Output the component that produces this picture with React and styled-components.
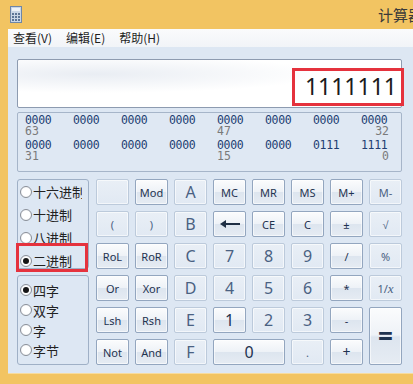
import styled, { createGlobalStyle } from "styled-components";

const Global = createGlobalStyle`
  html, body { margin: 0; padding: 0; background: #f2c462; }
  body { width: 413px; height: 384px; overflow: hidden; }
  * { box-sizing: border-box; }
`;

const Win = styled.div`
  width: 413px;
  height: 384px;
  background: #f2c462;
  display: flex;
  flex-direction: column;
  font-family: "Noto Sans", "Noto Sans CJK SC", sans-serif;
  overflow: hidden;
`;

const TitleBar = styled.div`
  height: 29px;
  flex: none;
  display: flex;
  align-items: center;
  justify-content: space-between;
  padding-left: 10px;
  white-space: nowrap;
`;

const Title = styled.div`
  font-family: "Noto Sans CJK SC", sans-serif;
  font-size: 15px;
  color: #3a3a3a;
  margin-right: -10px;
`;

const Client = styled.div`
  flex: 1;
  margin: 0 0 10px 8px;
  background: #dde7f3;
  display: flex;
  flex-direction: column;
  border-bottom: 1px solid #f7dc9f;
`;

const MenuBar = styled.div`
  height: 18px;
  flex: none;
  background: linear-gradient(#fafbfc, #f1f4f8);
  display: flex;
  gap: 14px;
  padding-left: 5px;
  align-items: center;
  font-family: "Noto Sans CJK SC", sans-serif;
  font-size: 12px;
  color: #1e1e1e;
  line-height: 18px;
`;

const Body = styled.div`
  padding: 12px 0 0 9px;
  display: flex;
  flex-direction: column;
`;

const Display = styled.div`
  position: relative;
  width: 385px;
  height: 49px;
  border: 1px solid #8d9bb0;
  border-radius: 2px;
  background: radial-gradient(ellipse 60% 40% at 20% 30%, #e9edf3, #ffffff);
  display: flex;
  align-items: flex-end;
  justify-content: flex-end;
  padding: 0 4px 7px 0;
  font-size: 23px;
  line-height: 28px;
  color: #1b1b1b;
`;

const Mark = styled.div`
  position: absolute;
  left: ${(p) => p.$l}px;
  top: ${(p) => p.$t}px;
  width: ${(p) => p.$w}px;
  height: ${(p) => p.$h}px;
  border: 3px solid #e5323d;
  pointer-events: none;
`;

const Bits = styled.div`
  margin-top: 4px;
  width: 385px;
  height: 60px;
  border: 1px solid #a6b5c9;
  border-radius: 2px;
  background: #dfe8f3;
  padding: 1px 0 0 7px;
  display: grid;
  grid-template-columns: repeat(7, 48px) 28px;
  grid-template-rows: 25px 25px;
  font-family: "DejaVu Sans Mono", monospace;
  font-size: 11.5px;
  line-height: 12px;
`;

const Cell = styled.div`
  display: flex;
  flex-direction: column;
`;

const Nib = styled.div`
  color: #223e72;
  letter-spacing: -0.3px;
  height: 11px;
`;

const Lbl = styled.div`
  color: #7a7a7a;
  height: 12px;
  text-align: ${(p) => (p.$right ? "right" : "left")};
`;

const Pad = styled.div`
  margin-top: 7px;
  display: grid;
  grid-template-columns: 73px repeat(8, 33px);
  grid-auto-rows: 26px;
  gap: 6px;
`;

const Group = styled.div`
  position: relative;
  grid-column: 1;
  grid-row: ${(p) => p.$row} / span 3;
  width: 72px;
  border: 1px solid #9fb0c6;
  border-radius: 3px;
  padding: ${(p) => p.$pad}px 0 0 2px;
`;

const Clip = styled.div`
  width: 62px;
  overflow: hidden;
  display: flex;
  flex-direction: column;
`;

const Opt = styled.div`
  height: ${(p) => p.$h}px;
  display: flex;
  align-items: center;
  gap: 1px;
  white-space: nowrap;
  font-family: "Noto Sans CJK SC", sans-serif;
  font-size: 13px;
  color: #222;
`;

const Dot = styled.span`
  flex: none;
  width: 12px;
  height: 12px;
  border-radius: 50%;
  border: 1px solid #8a8f98;
  background: radial-gradient(circle, #ffffff 50%, #e4e6ea);
  display: flex;
  align-items: center;
  justify-content: center;
  &::after {
    content: "";
    width: 6px;
    height: 6px;
    border-radius: 50%;
    background: ${(p) => (p.$on ? "#151515" : "transparent")};
  }
`;

const Key = styled.button`
  grid-column: span ${(p) => p.$cols || 1};
  grid-row: span ${(p) => p.$rows || 1};
  margin: 0;
  padding: 0;
  border-radius: 2px;
  border: 1px solid ${(p) => (p.$off ? "#bccadb" : "#93a6bf")};
  background: ${(p) =>
    p.$off
      ? "linear-gradient(#e9eff6, #e1e9f3)"
      : "linear-gradient(#fbfcfd 0%, #eef2f7 48%, #dde5ef 52%, #e6ecf3 100%)"};
  color: ${(p) => (p.$off ? "#4a6182" : "#1f3350")};
  font-family: "Noto Sans", sans-serif;
  font-size: ${(p) => p.$fs || 11}px;
  font-weight: ${(p) => (p.$bold ? 700 : 400)};
  display: flex;
  align-items: center;
  justify-content: center;
  line-height: 1;
  box-shadow: inset 0 0 0 1px rgba(255, 255, 255, 0.6);
`;

const Ital = styled.i`
  font-family: "Liberation Serif", serif;
  font-size: 13px;
`;

const CalcIcon = () => (
  <svg width="12" height="17" viewBox="0 0 12 17">
    <rect x="0.5" y="0.5" width="11" height="16" fill="#c9d6e6" stroke="#6f86a6" />
    <rect x="2" y="2" width="8" height="3" fill="#eef3f8" />
    {[0, 1, 2].map((r) =>
      [0, 1, 2].map((c) => (
        <rect key={`${r}${c}`} x={2 + c * 3} y={7 + r * 3} width="2" height="2" fill="#5c7596" />
      ))
    )}
  </svg>
);

const BackArrow = () => (
  <svg width="20" height="8" viewBox="0 0 20 8">
    <path d="M0 4 L6 0 L6 3 L20 3 L20 5 L6 5 L6 8 Z" fill="#1f2f44" />
  </svg>
);

const nibbles = [
  ["0000", "0000", "0000", "0000", "0000", "0000", "0000", "0000"],
  ["0000", "0000", "0000", "0000", "0000", "0000", "0111", "1111"],
];
const labels = [
  { 0: "63", 4: "47", 7: "32" },
  { 0: "31", 4: "15", 7: "0" },
];

const keys = [
  { t: "", off: true }, { t: "Mod" }, { t: "A", fs: 16, off: true },
  { t: "MC" }, { t: "MR" }, { t: "MS" }, { t: "M+" }, { t: "M-", off: true },
  { t: "(", off: true }, { t: ")", off: true }, { t: "B", fs: 16, off: true },
  { t: "back" }, { t: "CE" }, { t: "C" }, { t: "±" }, { t: "√", off: true },
  { t: "RoL" }, { t: "RoR" }, { t: "C", fs: 16, off: true },
  { t: "7", fs: 16, off: true }, { t: "8", fs: 16, off: true }, { t: "9", fs: 16, off: true },
  { t: "/" }, { t: "%", off: true },
  { t: "Or" }, { t: "Xor" }, { t: "D", fs: 16, off: true },
  { t: "4", fs: 16, off: true }, { t: "5", fs: 16, off: true }, { t: "6", fs: 16, off: true },
  { t: "*" }, { t: "inv", off: true },
  { t: "Lsh" }, { t: "Rsh" }, { t: "E", fs: 16, off: true },
  { t: "1", fs: 16 }, { t: "2", fs: 16, off: true }, { t: "3", fs: 16, off: true },
  { t: "-" }, { t: "=", fs: 26, bold: true, rows: 2 },
  { t: "Not" }, { t: "And" }, { t: "F", fs: 16, off: true },
  { t: "0", fs: 16, cols: 2 }, { t: ".", off: true }, { t: "+", fs: 14 },
];

const keyLabel = (t) => {
  if (t === "back") return <BackArrow />;
  if (t === "inv") return <>1/<Ital>x</Ital></>;
  return t;
};

export default function App() {
  return (
    <>
      <Global />
      <Win>
        <TitleBar>
          <CalcIcon />
          <Title>计算器</Title>
        </TitleBar>
        <Client>
          <MenuBar>
            <span>查看(V)</span>
            <span>编辑(E)</span>
            <span>帮助(H)</span>
          </MenuBar>
          <Body>
            <Display>
              1111111
              <Mark $l={274} $t={8} $w={112} $h={38} />
            </Display>
            <Bits>
              {nibbles.map((row, r) =>
                row.map((n, c) => (
                  <Cell key={`${r}-${c}`}>
                    <Nib>{n}</Nib>
                    <Lbl $right={c === 7}>{labels[r][c] || ""}</Lbl>
                  </Cell>
                ))
              )}
            </Bits>
            <Pad>
              <Group $pad={0} $row={1}>
                <Clip>
                  <Opt $h={23}><Dot />十六进制</Opt>
                  <Opt $h={23}><Dot />十进制</Opt>
                  <Opt $h={23}><Dot />八进制</Opt>
                  <Opt $h={23}><Dot $on />二进制</Opt>
                </Clip>
                <Mark $l={-2} $t={63} $w={72} $h={29} />
              </Group>
              <Group $pad={4} $row={4}>
                <Opt $h={20}><Dot $on />四字</Opt>
                <Opt $h={20}><Dot />双字</Opt>
                <Opt $h={20}><Dot />字</Opt>
                <Opt $h={20}><Dot />字节</Opt>
              </Group>
              {keys.map((k, i) => (
                <Key key={i} $off={k.off} $fs={k.fs} $bold={k.bold} $rows={k.rows} $cols={k.cols}>
                  {keyLabel(k.t)}
                </Key>
              ))}
            </Pad>
          </Body>
        </Client>
      </Win>
    </>
  );
}
